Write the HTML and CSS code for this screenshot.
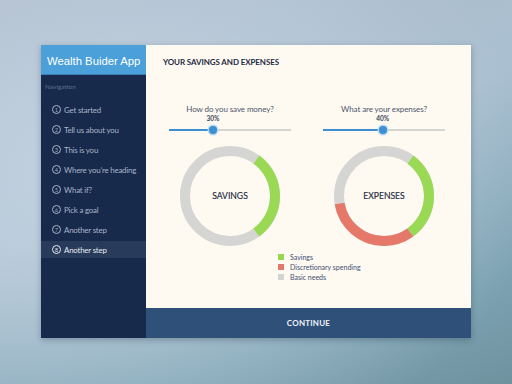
FILE: index.html
```html
<!DOCTYPE html>
<html lang="en">
<head>
    <meta charset="UTF-8">
    <title>Wealth Buider App</title>
    <link rel="stylesheet" href="styles.css">
</head>
<body>
    <div class="app">
        <aside class="sidebar">
            <div class="brand">Wealth Buider App</div>
            <div class="nav-label">Navigation</div>
            <ul class="steps">
                <li class="step"><span class="num">1</span>Get started</li>
                <li class="step"><span class="num">2</span>Tell us about you</li>
                <li class="step"><span class="num">3</span>This is you</li>
                <li class="step"><span class="num">4</span>Where you’re heading</li>
                <li class="step"><span class="num">5</span>What if?</li>
                <li class="step"><span class="num">6</span>Pick a goal</li>
                <li class="step"><span class="num">7</span>Another step</li>
                <li class="step active"><span class="num">8</span>Another step</li>
            </ul>
        </aside>

        <main class="main">
            <div class="content">
                <h1 class="title">YOUR SAVINGS AND EXPENSES</h1>

                <div class="charts">
                    <div class="chart">
                        <div class="question">How do you save money?</div>
                        <div class="slider">
                            <div class="fill" style="width: 36%">
                                <span class="value">30%</span>
                                <span class="thumb"></span>
                            </div>
                        </div>
                        <svg class="donut" width="100" height="100" viewBox="0 0 100 100">
                            <circle class="ring base" cx="50" cy="50" r="45"></circle>
                            <circle class="ring savings" cx="50" cy="50" r="45"
                                stroke-dasharray="84.8 282.7" stroke-dashoffset="-28.3"></circle>
                            <text x="50" y="53" class="donut-label">SAVINGS</text>
                        </svg>
                    </div>

                    <div class="chart">
                        <div class="question">What are your expenses?</div>
                        <div class="slider">
                            <div class="fill" style="width: 49%">
                                <span class="value">40%</span>
                                <span class="thumb"></span>
                            </div>
                        </div>
                        <svg class="donut" width="100" height="100" viewBox="0 0 100 100">
                            <circle class="ring base" cx="50" cy="50" r="45"></circle>
                            <circle class="ring savings" cx="50" cy="50" r="45"
                                stroke-dasharray="84.8 282.7" stroke-dashoffset="-28.3"></circle>
                            <circle class="ring spending" cx="50" cy="50" r="45"
                                stroke-dasharray="91.1 282.7" stroke-dashoffset="-113.1"></circle>
                            <text x="50" y="53" class="donut-label">EXPENSES</text>
                        </svg>
                    </div>
                </div>

                <ul class="legend">
                    <li><span class="swatch green"></span>Savings</li>
                    <li><span class="swatch red"></span>Discretionary spending</li>
                    <li><span class="swatch grey"></span>Basic needs</li>
                </ul>
            </div>

            <button class="continue">CONTINUE</button>
        </main>
    </div>
</body>
</html>
```

FILE: styles.css
```css
* {
    margin: 0;
    padding: 0;
    box-sizing: border-box;
}

body {
    width: 512px;
    height: 384px;
    overflow: hidden;
    padding: 45px 0 0 41px;
    font-family: 'Lato', 'Open Sans', sans-serif;
    background:
        radial-gradient(ellipse 420px 300px at 120px 170px, rgba(200, 214, 228, 0.9) 0%, rgba(200, 214, 228, 0) 100%),
        linear-gradient(160deg, #aebccb 0%, #a9bfd0 45%, #7da3b3 80%, #6f929f 100%);
}

.app {
    display: flex;
    width: 430px;
    height: 293px;
    box-shadow: 0 2px 6px rgba(20, 40, 60, 0.3);
}

/* sidebar */
.sidebar {
    width: 105px;
    background-color: #172a4c;
    color: #a9b3c5;
}

.brand {
    height: 30px;
    padding: 0 0 0 6px;
    background-color: #4ba0d9;
    color: #fff;
    font-family: 'Liberation Sans', Arial, sans-serif;
    font-size: 11.3px;
    line-height: 32px;
    white-space: nowrap;
    border-bottom: 1px solid #3d7fb3;
}

.nav-label {
    padding: 8px 0 0 4px;
    height: 26px;
    font-size: 6.5px;
    color: #5f6f8c;
}

.steps {
    list-style: none;
}

.step {
    display: flex;
    align-items: center;
    height: 17px;
    margin-bottom: 3px;
    padding-left: 11px;
    font-size: 7.9px;
    letter-spacing: -0.2px;
    white-space: nowrap;
}

.step.active {
    background-color: #283b5b;
    color: #e6eaf0;
}

.num {
    display: inline-flex;
    justify-content: center;
    align-items: center;
    width: 9px;
    height: 9px;
    margin-right: 3px;
    border: 1px solid currentColor;
    border-radius: 50%;
    font-size: 5px;
    letter-spacing: 0;
}

/* main */
.main {
    display: flex;
    flex-direction: column;
    width: 325px;
    background-color: #fefaf1;
}

.content {
    flex: 1;
    padding: 12px 0 0 17px;
}

.title {
    font-size: 8px;
    line-height: 10px;
    font-weight: 700;
    color: #1f2b45;
    letter-spacing: -0.1px;
}

.charts {
    display: grid;
    grid-template-columns: 122px 122px;
    gap: 32px;
    margin: 37px 0 0 6px;
}

.chart {
    display: flex;
    flex-direction: column;
    align-items: center;
}

.question {
    font-size: 8px;
    line-height: 10px;
    color: #4b556a;
    letter-spacing: -0.1px;
}

.slider {
    width: 122px;
    height: 2px;
    margin-top: 15px;
    background-color: #d4d4d2;
}

.fill {
    position: relative;
    height: 2px;
    background-color: #3c8fd3;
}

.thumb {
    position: absolute;
    right: -4px;
    top: -3px;
    width: 8px;
    height: 8px;
    border-radius: 50%;
    background-color: #3c8fd3;
    box-shadow: 0 0 0 1.5px #b9d7ef;
}

.value {
    position: absolute;
    right: -8px;
    top: -14px;
    width: 16px;
    text-align: center;
    font-size: 6.5px;
    font-weight: 700;
    color: #3b4458;
}

.donut {
    margin-top: 15px;
}

.ring {
    fill: none;
    stroke-width: 10;
    transform: rotate(-90deg);
    transform-origin: 50px 50px;
}

.ring.base {
    stroke: #d5d5d3;
}

.ring.savings {
    stroke: #9ad953;
}

.ring.spending {
    stroke: #e6786a;
}

.donut-label {
    text-anchor: middle;
    font-family: 'Lato', sans-serif;
    font-size: 8.6px;
    font-weight: 400;
    fill: #1f2a44;
    stroke: #1f2a44;
    stroke-width: 0.15px;
}

.legend {
    list-style: none;
    margin: 6px 0 0 115px;
}

.legend li {
    display: flex;
    align-items: center;
    height: 10px;
    font-size: 7px;
    color: #3d4e73;
}

.swatch {
    width: 6px;
    height: 6px;
    margin-right: 6px;
}

.swatch.green {
    background-color: #94d94e;
}

.swatch.red {
    background-color: #e5786a;
}

.swatch.grey {
    background-color: #d3d3d3;
}

.continue {
    height: 30px;
    border: none;
    background-color: #2f5079;
    color: #eef2f7;
    font-family: 'Lato', sans-serif;
    font-size: 8px;
    font-weight: 700;
    letter-spacing: 0.2px;
}
```
